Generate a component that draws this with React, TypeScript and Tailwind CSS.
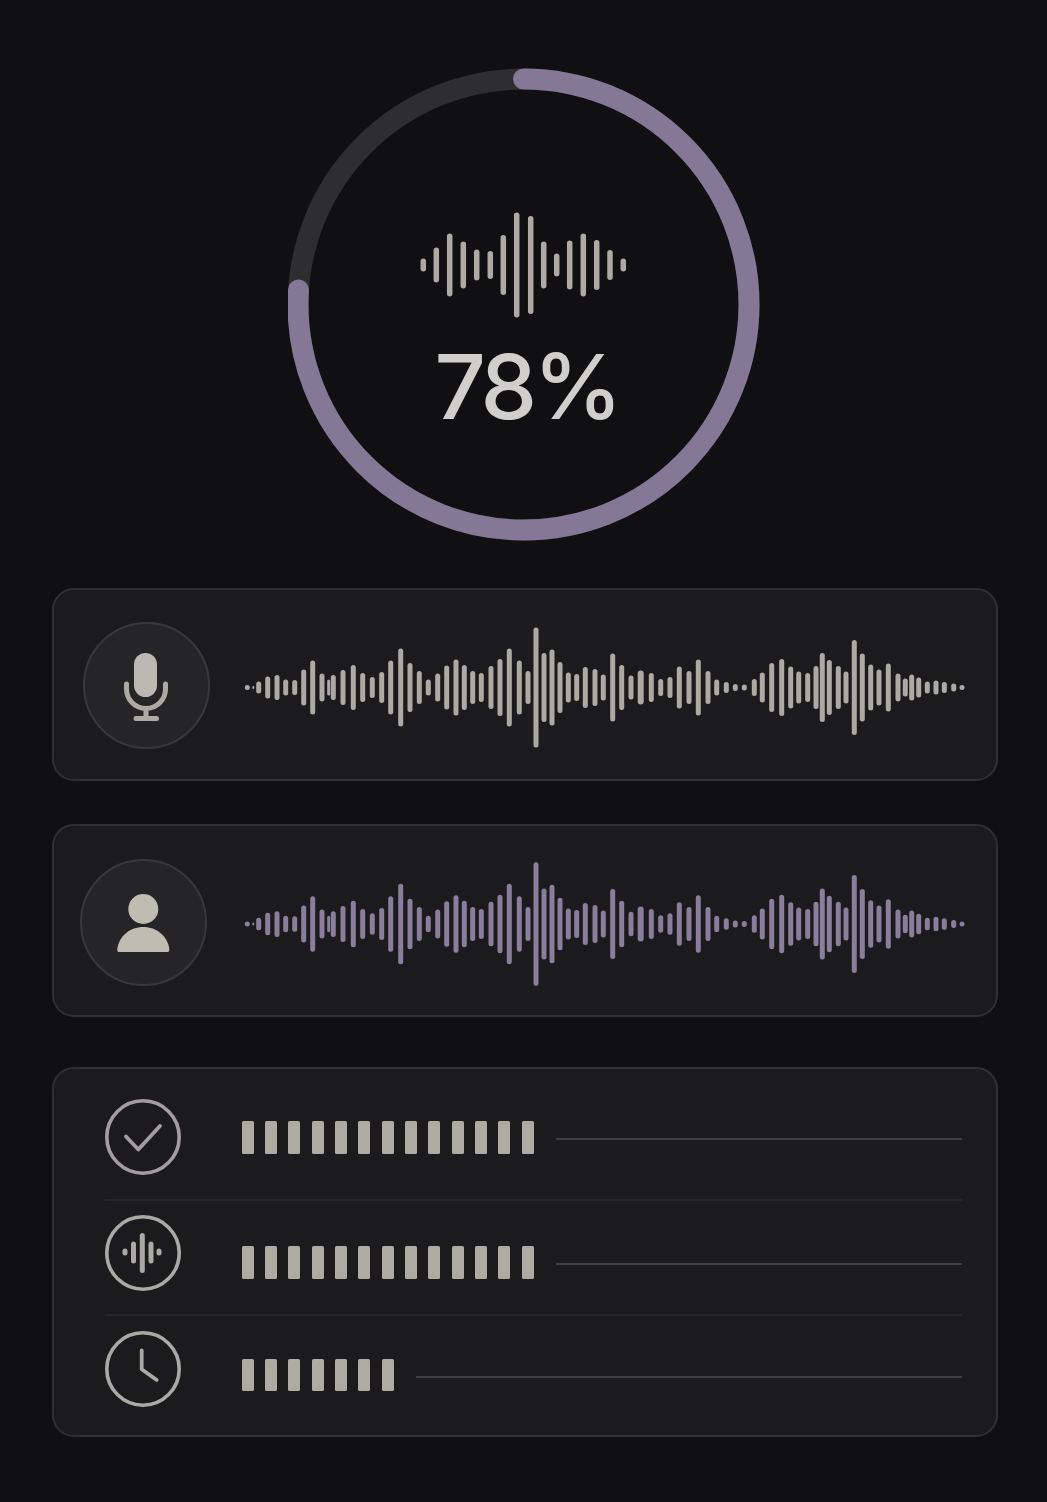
const hero: [number, number][] = [
  [423.3, 13], [436.3, 35], [449.7, 63], [463.3, 47], [476.7, 31], [490.3, 28], [503.3, 60], [516.7, 105],
  [530.7, 98], [543.7, 47], [556.7, 23], [569.7, 49], [583.3, 63], [596.7, 50], [610, 30], [623.3, 13],
];

// [center x on the page, height, width]
const wave: [number, number, number][] = [
  [247.3, 5, 5], [253.3, 3, 2], [258.7, 12, 5], [267.7, 22, 5], [277, 25, 5], [285.7, 16, 5], [294.7, 15, 5],
  [303.7, 36, 5], [312.7, 54, 5], [322, 28, 5], [328.7, 16, 3], [333.3, 25, 5], [343, 35, 5], [353.3, 45, 5],
  [362.7, 29, 5], [372.3, 21, 5], [381.7, 31, 5], [390.7, 54, 5], [400.7, 78, 5], [410, 49, 5], [419.3, 33, 5],
  [428.3, 16, 5], [437.7, 28, 5], [446.7, 44, 5], [456, 56, 5], [464.3, 45, 5], [472.7, 33, 5], [481.3, 29, 5],
  [491, 43, 5], [500, 57, 5], [509.3, 78, 5], [519.3, 54, 5], [528, 33, 5], [536, 120, 5], [544, 69, 5],
  [552, 76, 5], [560, 51, 5], [568.3, 30, 5], [576.7, 27, 5], [585.3, 41, 5], [595, 37, 5], [603.3, 26, 5],
  [612.7, 68, 5], [621.7, 45, 5], [631, 24, 5], [640.7, 34, 6], [651.3, 29, 5], [660.7, 17, 5], [670, 21, 5],
  [679.3, 42, 5], [689, 33, 5], [698.3, 56, 5], [708, 33, 5], [716.7, 16, 5], [726.3, 11, 5], [735.3, 7, 5],
  [744.3, 6, 5], [754.3, 17, 5], [762.3, 30, 5], [771.7, 49, 5], [781.7, 57, 5], [790.7, 42, 5], [798.7, 32, 5],
  [807.7, 29, 5], [816, 43, 5], [822.3, 69, 5], [829.3, 55, 5], [838.3, 43, 5], [846, 32, 5], [854.3, 95, 5],
  [862.3, 68, 5], [870.7, 46, 5], [879, 36, 5], [888.3, 48, 5], [898, 28, 5], [905.3, 18, 5], [911.7, 26, 5],
  [918.7, 20, 5], [927.3, 12, 5], [936, 14, 5], [944.3, 11, 5], [953.7, 8, 5], [962, 5, 5],
];

function Wave({ color, cy, scale }: { color: string; cy: number; scale: number }) {
  return (
    <svg width="724" height="140" viewBox="244 0 724 140" className="shrink-0">
      {wave.map(([x, h, w], i) => (
        <rect key={i} x={x - w / 2} y={cy - (h * scale) / 2} width={w} height={h * scale} rx={w / 2} fill={color} />
      ))}
    </svg>
  );
}

function Blocks({ n }: { n: number }) {
  return (
    <div className="flex gap-[11.33px] shrink-0">
      {Array.from({ length: n }, (_, i) => (
        <div key={i} className="w-[12px] h-[32.5px] rounded-[1.5px] bg-[#aeaba3]" />
      ))}
    </div>
  );
}

function Check() {
  return (
    <svg width="76" height="76" viewBox="0 0 76 76" fill="none" className="shrink-0" stroke="#a39da0" strokeWidth="3.6" strokeLinecap="round" strokeLinejoin="round">
      <circle cx="38" cy="38" r="36.2" />
      <path d="M21 37.5 33.3 50.5 55 27" strokeWidth="3.8" />
    </svg>
  );
}

function Voice() {
  return (
    <svg width="76" height="76" viewBox="0 0 76 76" fill="none" className="shrink-0" stroke="#aaa9a4" strokeWidth="3.6" strokeLinecap="round">
      <circle cx="38" cy="38" r="36.2" />
      <path d="M20 36v2M28.5 29v17M37.3 20.5v35M46 29v17M54 36v2" strokeWidth="5" />
    </svg>
  );
}

function Clock() {
  return (
    <svg width="76" height="76" viewBox="0 0 76 76" fill="none" className="shrink-0" stroke="#aaa9a4" strokeWidth="3.6" strokeLinecap="round" strokeLinejoin="round">
      <circle cx="38" cy="38" r="36.2" />
      <path d="M36.7 19.5V38.3L51.7 49" strokeWidth="3.8" />
    </svg>
  );
}

export default function App() {
  const r = 225.5;
  const c = 2 * Math.PI * r;
  return (
    <div className="min-h-[1502px] bg-[#101013] pt-[68px] pl-[52px] pr-[49px] font-['Inter','Liberation_Sans',sans-serif]">
      <div className="relative w-[472px] h-[474px] ml-[236px]">
        <svg width="472" height="474" viewBox="0 0 472 474" fill="none">
          <circle cx="235.5" cy="236.5" r={r} stroke="#2e2d30" strokeWidth="21" />
          <circle
            cx="235.5"
            cy="236.5"
            r={r}
            stroke="#857796"
            strokeWidth="21"
            strokeLinecap="round"
            strokeDasharray={`${c * 0.76} ${c}`}
            transform="rotate(-90 235.5 236.5)"
          />
        </svg>
        <div className="absolute inset-0 flex flex-col items-center pt-[144px]">
          <svg width="208" height="106" viewBox="420 212 208 106" className="shrink-0 -ml-[1px]">
            {hero.map(([x, h], i) => (
              <rect key={i} x={x - 2.75} y={265 - h / 2} width="5.5" height={h} rx="2.75" fill="#aeaaa3" />
            ))}
          </svg>
          <div className="mt-[16px] ml-[5px] text-[#d0cfcb] text-[90px] leading-[106px] font-medium tracking-[-4px]">78%</div>
        </div>
      </div>

      <div className="mt-[46px] h-[193px] flex items-center pl-[29px] gap-[34px] rounded-[22px] border-2 border-[#303032] bg-[#1b1b1d]">
        <div className="flex items-center justify-center shrink-0 size-[127px] rounded-full bg-[#252527] border-2 border-[#38383a] mt-[1px]">
          <svg width="123" height="123" viewBox="2 2 123 123" fill="none">
            <rect x="51" y="31" width="23" height="44" rx="11.5" fill="#bdb8b1" />
            <path d="M43.5 62v5a19.5 19.5 0 0 0 39 0v-5M63 87v9M53 96.5h20.5" stroke="#adaaa3" strokeWidth="5" strokeLinecap="round" />
          </svg>
        </div>
        <Wave color="#adaaa3" cy={72.5} scale={1} />
      </div>

      <div className="mt-[43px] h-[193px] flex items-center pl-[26px] gap-[37px] rounded-[22px] border-2 border-[#303032] bg-[#1b1b1d]">
        <div className="flex items-center justify-center shrink-0 size-[127px] rounded-full bg-[#252527] border-2 border-[#38383a] mt-[3px]">
          <svg width="123" height="123" viewBox="2 2 123 123" fill="#bfbcb2">
            <circle cx="63.3" cy="50" r="15" />
            <path d="M39 93Q37 93 37.3 90C39 77 50 68 63.3 68C76.6 68 87.6 77 89.3 90Q89.6 93 87.6 93Z" />
          </svg>
        </div>
        <Wave color="#8b7d9c" cy={73} scale={1.03} />
      </div>

      <div className="mt-[50px] h-[370px] rounded-[22px] border-2 border-[#303032] bg-[#1b1b1d] pl-[51px] pr-[34px] pt-[30px]">
        <div className="flex items-start h-[102px] border-b-2 border-[#252527]">
          <Check />
          <div className="ml-[60.7px] mt-[22px]"><Blocks n={13} /></div>
          <div className="ml-[22px] mt-[39px] h-[2px] flex-1 bg-[#3e3e40]" />
        </div>
        <div className="flex items-start pt-[14px] h-[115px] border-b-2 border-[#252527]">
          <Voice />
          <div className="ml-[60.7px] mt-[31px]"><Blocks n={13} /></div>
          <div className="ml-[22px] mt-[48px] h-[2px] flex-1 bg-[#3e3e40]" />
        </div>
        <div className="flex items-start pt-[15px]">
          <Clock />
          <div className="ml-[60.7px] mt-[27.5px]"><Blocks n={7} /></div>
          <div className="ml-[22px] mt-[45px] h-[2px] flex-1 bg-[#3e3e40]" />
        </div>
      </div>
    </div>
  );
}
